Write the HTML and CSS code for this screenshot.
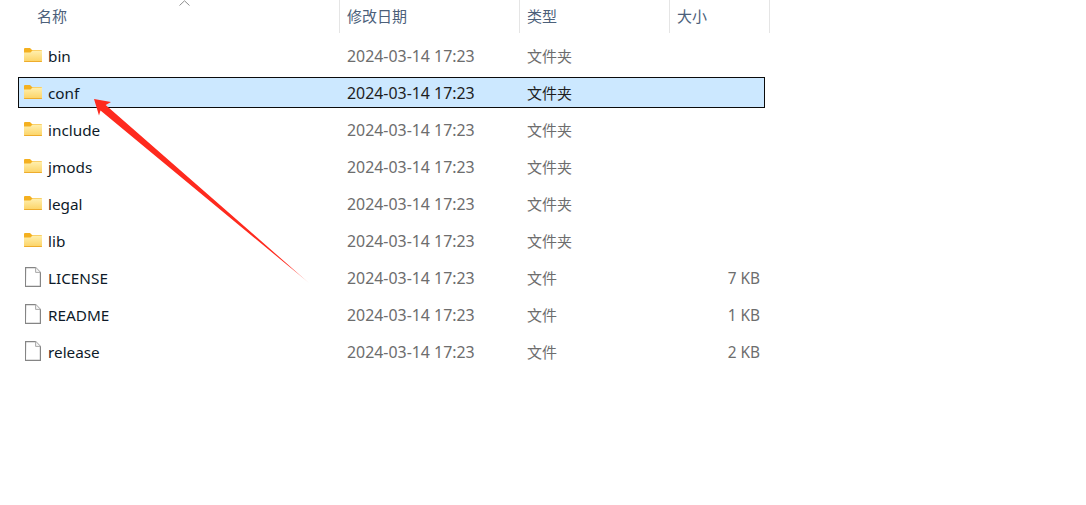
FILE: index.html
```html
<!DOCTYPE html>
<html lang="zh-CN">
<head>
<meta charset="utf-8">
<title>文件列表</title>
<link rel="stylesheet" href="styles.css">
</head>
<body>
<svg width="0" height="0" class="defs">
  <defs>
    <symbol id="folder" viewBox="0 0 18 14">
      <path d="M0 1a1 1 0 0 1 1-1h5l2 2h9a1 1 0 0 1 1 1v10a1 1 0 0 1-1 1h-16a1 1 0 0 1-1-1z" fill="#f4b01f"/>
      <path d="M0 4.500h6.500l2-2h9.500v10.500h-18z" fill="url(#foldbody)"/>
      <path d="M0 13h18a1 1 0 0 1-1 1h-16a1 1 0 0 1-1-1z" fill="#eeac2c"/>
    </symbol>
    <linearGradient id="foldbody" x1="0" y1="0" x2="0" y2="1">
      <stop offset="0" stop-color="#fff0b0"/>
      <stop offset="1" stop-color="#fcd56a"/>
    </linearGradient>
    <symbol id="file" viewBox="0 0 16 20">
      <path d="M0.600 0.600h10l4.800 4.800v14h-15.000z" fill="#fff" stroke="#858585" stroke-width="1.200"/>
      <path d="M10.600 0.600v4.800h4.800" fill="#f6f6f6" stroke="#a8a8a8" stroke-width="1"/>
    </symbol>
    <linearGradient id="fade" gradientUnits="userSpaceOnUse" x1="94" y1="99" x2="309" y2="283">
      <stop offset="0.9" stop-color="#fe2a1e"/>
      <stop offset="1" stop-color="#fe2a1e" stop-opacity="0.3"/>
    </linearGradient>
  </defs>
</svg>
<main class="list">
  <header class="head">
    <div class="hcell name">名称<svg class="caret" width="11" height="6" viewBox="0 0 11 6"><path d="M0.500 5.500 5.500 0.800 10.500 5.500" fill="none" stroke="#8c8c8c" stroke-width="1"/></svg></div>
    <div class="hcell date">修改日期</div>
    <div class="hcell type">类型</div>
    <div class="hcell size">大小</div>
  </header>
  <div class="rows">
    <div class="row"><div class="c-name"><svg class="ico"><use href="#folder"/></svg>bin</div><div class="c-date">2024-03-14 17:23</div><div class="c-type">文件夹</div><div class="c-size"></div></div>
    <div class="row sel"><div class="c-name"><svg class="ico"><use href="#folder"/></svg>conf</div><div class="c-date">2024-03-14 17:23</div><div class="c-type">文件夹</div><div class="c-size"></div></div>
    <div class="row"><div class="c-name"><svg class="ico"><use href="#folder"/></svg>include</div><div class="c-date">2024-03-14 17:23</div><div class="c-type">文件夹</div><div class="c-size"></div></div>
    <div class="row"><div class="c-name"><svg class="ico"><use href="#folder"/></svg>jmods</div><div class="c-date">2024-03-14 17:23</div><div class="c-type">文件夹</div><div class="c-size"></div></div>
    <div class="row"><div class="c-name"><svg class="ico"><use href="#folder"/></svg>legal</div><div class="c-date">2024-03-14 17:23</div><div class="c-type">文件夹</div><div class="c-size"></div></div>
    <div class="row"><div class="c-name"><svg class="ico"><use href="#folder"/></svg>lib</div><div class="c-date">2024-03-14 17:23</div><div class="c-type">文件夹</div><div class="c-size"></div></div>
    <div class="row"><div class="c-name"><svg class="ico doc"><use href="#file"/></svg>LICENSE</div><div class="c-date">2024-03-14 17:23</div><div class="c-type">文件</div><div class="c-size">7 KB</div></div>
    <div class="row"><div class="c-name"><svg class="ico doc"><use href="#file"/></svg>README</div><div class="c-date">2024-03-14 17:23</div><div class="c-type">文件</div><div class="c-size">1 KB</div></div>
    <div class="row"><div class="c-name"><svg class="ico doc"><use href="#file"/></svg>release</div><div class="c-date">2024-03-14 17:23</div><div class="c-type">文件</div><div class="c-size">2 KB</div></div>
  </div>
</main>
<svg class="arrow" width="1086" height="505" viewBox="0 0 1086 505">
  <path d="M94 99 111 102 105.700 105 309 283 100.500 110.500 99 115.500Z" fill="url(#fade)"/>
</svg>
</body>
</html>
```
FILE: styles.css
```css
html, body {
  margin: 0;
  padding: 0;
  background: #fff;
  overflow: hidden;
}
body {
  width: 1086px;
  height: 505px;
  position: relative;
  font-family: "Noto Sans", "Noto Sans CJK SC", sans-serif;
  font-size: 15px;
}
.defs { position: absolute; }
.list { width: 770px; }
.head {
  display: grid;
  grid-template-columns: 340px 180px 150px 100px;
  height: 32px;
}
.hcell {
  position: relative;
  border-right: 1px solid #e5e5e5;
  padding-left: 7px;
  line-height: 33px;
  color: #4c607a;
  font-size: 15px;
}
.hcell.name { padding-left: 37px; }
.caret { position: absolute; left: 179px; top: 0; }
.rows {
  display: flex;
  flex-direction: column;
  gap: 6px;
  margin-top: 8px;
  padding-left: 18px;
  width: 747px;
}
.row {
  display: grid;
  grid-template-columns: 322px 180px 150px 93px;
  height: 31px;
  align-items: center;
  box-sizing: border-box;
  border: 1px solid transparent;
  color: #6d6d6d;
}
.row.sel {
  background: #cce8ff;
  border-color: #0b0b0b;
  color: #1e1e1e;
}
.c-name {
  display: flex;
  align-items: center;
  color: #0e1a28;
  padding-left: 5px;
  font-size: 15.3px;
}
.ico {
  width: 18px;
  height: 14px;
  margin-right: 6px;
  margin-top: -2px;
}
.ico.doc {
  width: 16px;
  height: 20px;
  margin-left: 1px;
  margin-right: 7px;
  margin-top: -1px;
}
.c-date { padding-left: 6px; font-size: 15.9px; }
.c-type { padding-left: 6px; }
.c-size { text-align: right; padding: 2px 4px 0 0; font-size: 15.4px; }
.arrow {
  position: absolute;
  left: 0;
  top: 0;
  pointer-events: none;
}
```
